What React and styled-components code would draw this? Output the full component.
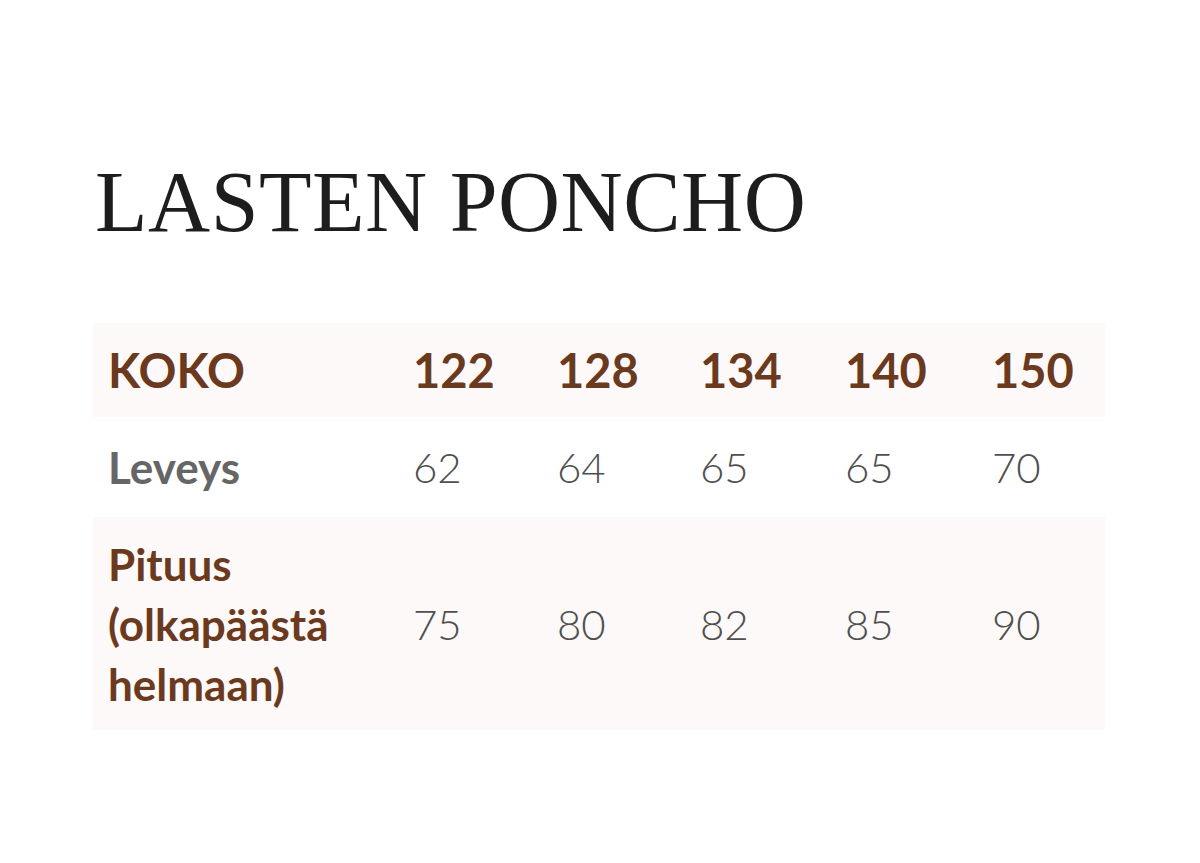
import React from "react";
import styled, { createGlobalStyle } from "styled-components";

const GlobalStyle = createGlobalStyle`
  html, body {
    margin: 0;
    padding: 0;
    background: #ffffff;
  }
`;

const Page = styled.div`
  width: 1200px;
  height: 863px;
  box-sizing: border-box;
  padding: 152px 95px 0 93px;
  background: #ffffff;
`;

const Title = styled.h1`
  margin: 0 0 0 2px;
  font-family: "Liberation Serif", "Times New Roman", serif;
  font-weight: 400;
  font-size: 86px;
  line-height: 100px;
  color: #1d1d1d;
  letter-spacing: 0.5px;
`;

const Table = styled.div`
  margin-top: 71px;
  display: flex;
  flex-direction: column;
  width: 1012px;
`;

const Row = styled.div`
  display: grid;
  grid-template-columns: 305px 144px 143px 145px 147px 1fr;
  align-items: center;
  min-height: ${(p) => p.$height}px;
  background: ${(p) => (p.$shaded ? "#fcf9f8" : "#ffffff")};
`;

const Cell = styled.div`
  padding: 16px 15px;
  font-family: Lato, "Noto Sans", sans-serif;
  font-size: ${(p) => (p.$head ? 47 : 42)}px;
  font-weight: ${(p) => (p.$head ? 700 : 300)};
  color: ${(p) => (p.$head ? "#6b3a1e" : "#4f4f4f")};
  line-height: 60px;
`;

const Label = styled(Cell)`
  font-size: ${(p) => (p.$head ? 47 : 44)}px;
  font-weight: 700;
  color: ${(p) => p.$color};
`;

const sizes = ["122", "128", "134", "140", "150"];
const rows = [
  { label: "Leveys", color: "#666666", values: ["62", "64", "65", "65", "70"], height: 100 },
  {
    label: (
      <>
        Pituus
        <br />
        (olkapäästä
        <br />
        helmaan)
      </>
    ),
    color: "#6b3a1e",
    values: ["75", "80", "82", "85", "90"],
    height: 213,
    shaded: true,
  },
];

export default function App() {
  return (
    <>
      <GlobalStyle />
      <Page>
        <Title>LASTEN PONCHO</Title>
        <Table>
          <Row $shaded $height={94}>
            <Label $head $color="#6b3a1e">KOKO</Label>
            {sizes.map((s) => (
              <Cell $head key={s}>
                {s}
              </Cell>
            ))}
          </Row>
          {rows.map((r, i) => (
            <Row key={i} $shaded={r.shaded} $height={r.height}>
              <Label $color={r.color}>{r.label}</Label>
              {r.values.map((v, j) => (
                <Cell key={j}>{v}</Cell>
              ))}
            </Row>
          ))}
        </Table>
      </Page>
    </>
  );
}
